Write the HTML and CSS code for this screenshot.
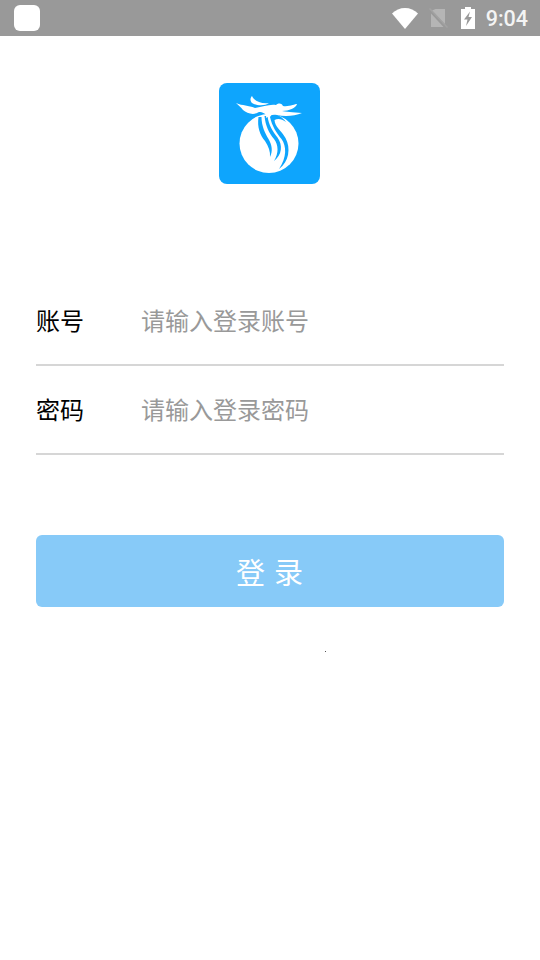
FILE: index.html
```html
<!DOCTYPE html>
<html lang="zh-CN">
<head>
  <meta charset="UTF-8" />
  <meta name="viewport" content="width=device-width, initial-scale=1.0" />
  <title>登录</title>
  <link rel="stylesheet" href="styles.css">
</head>
<body>
  <div class="status-bar">
    <div class="app-badge"></div>
    <div class="status-icons">
      <svg class="icon-wifi" width="26" height="21" viewBox="0 0 26 21">
        <path d="M0 5.500C3.500 2 8 0 13 0s9.500 2 13 5.500L13 21z" fill="#fff"/>
      </svg>
      <svg class="icon-sim" width="19" height="20" viewBox="0 0 19 20">
        <path d="M6.500 1H16v15.500L3 2.500z" fill="#b5b5b5"/>
        <path d="M2 5.500 14.500 19H2z" fill="#b5b5b5"/>
        <path d="M0.500 0.500 18.500 19.500" stroke="#a3a3a3" stroke-width="1.500"/>
      </svg>
      <svg class="icon-battery" width="14" height="22" viewBox="0 0 14 22">
        <path d="M4 0h6v2h4v20H0V2h4z" fill="#fff"/>
        <path d="M9 4.500 3 12.500h3.500L5 19l6-9H7.500z" fill="#999"/>
      </svg>
      <span class="clock">9:04</span>
    </div>
  </div>

  <div class="logo">
    <svg width="101" height="101" viewBox="0 0 101 101">
      <rect width="101" height="101" rx="8" fill="#0ea5fd"/>
      <circle cx="50" cy="60.500" r="29.500" fill="#fff"/>
      <path d="M39.500 34C38 44 41 52 46 58C49.500 63 51.500 69 51 74C54 68 53 62 49.500 56C46 50 42.500 43 42.500 34z" fill="#0ea5fd"/>
      <path d="M45.500 33C46.500 43 50 50 55 56C59.500 62 60 70 55 78C63 72 64 62 58.500 54.500C54 48.500 49.500 42 48.500 33z" fill="#0ea5fd"/>
      <path d="M51 34C53 43 57.500 50 62.500 56C67.500 63 68 74 60 86C70 79 72 65 66.500 55C62 47 56 44 55.500 37C59 35 63 36 67 39C63 33.500 58 31 53 31z" fill="#0ea5fd"/>
      <path d="M17 20C24 23 29 22 36 25C44 24 50 21 57 22C60 20 62 20 64 23C70 24 76 21 78 21C77 25 70 28 63 28C66 29 74 29 83 30C76 33 66 34 58 32C54 31 51 32 47 35C48 31 44 29 40 29C34 33 28 30 24 27C22 24 19 22 17 20z" fill="#fff"/>
      <path d="M33 13C35 18 42 21 50 20C46 23 38 23 33 20C31 18 31 15 33 13z" fill="#fff"/>
    </svg>
  </div>

  <form class="login-form">
    <label class="field">
      <span class="field-name">账号</span>
      <input type="text" placeholder="请输入登录账号" />
    </label>
    <label class="field">
      <span class="field-name">密码</span>
      <input type="password" placeholder="请输入登录密码" />
    </label>
    <button type="button" class="login-button">登录</button>
  </form>
  <div class="speck"></div>
</body>
</html>
```

FILE: styles.css
```css
body {
  margin: 0;
  background-color: #ffffff;
  font-family: "Noto Sans CJK SC", "Noto Sans", sans-serif;
}

.status-bar {
  display: flex;
  align-items: center;
  justify-content: space-between;
  height: 36px;
  padding: 0 12px 0 14px;
  background-color: #999999;
}

.app-badge {
  width: 26px;
  height: 26px;
  border-radius: 6px;
  background-color: #ffffff;
}

.status-icons {
  display: flex;
  align-items: center;
}

.icon-wifi {
  margin-right: 11px;
}

.icon-sim {
  margin-right: 13px;
}

.icon-battery {
  margin-right: 11px;
}

.clock {
  font-family: Roboto, sans-serif;
  font-size: 21.500px;
  font-weight: 500;
  color: #f4f4f4;
}

.logo {
  display: flex;
  justify-content: center;
  margin-top: 47px;
  padding-right: 2px;
}

.login-form {
  margin: 93px 36px 0;
}

.field {
  display: flex;
  align-items: center;
  height: 87px;
  border-bottom: 2px solid #d6d6d6;
}

.field-name {
  width: 105px;
  margin-bottom: 2px;
  font-size: 24px;
  color: #000000;
}

.field input {
  flex: 1;
  min-width: 0;
  margin-bottom: 2px;
  padding: 0;
  border: none;
  outline: none;
  font-family: inherit;
  font-size: 24px;
  color: #000000;
}

.field input::placeholder {
  color: #999999;
}

.login-button {
  display: block;
  width: 100%;
  height: 72px;
  margin-top: 80px;
  padding: 0;
  border: none;
  border-radius: 6px;
  background-color: #87caf8;
  color: #ffffff;
  font-family: inherit;
  font-size: 29px;
  letter-spacing: 9px;
  text-indent: 8px;
}

.speck {
  width: 1px;
  height: 1px;
  margin: 44px 0 0 325px;
  background-color: #555555;
}
```
